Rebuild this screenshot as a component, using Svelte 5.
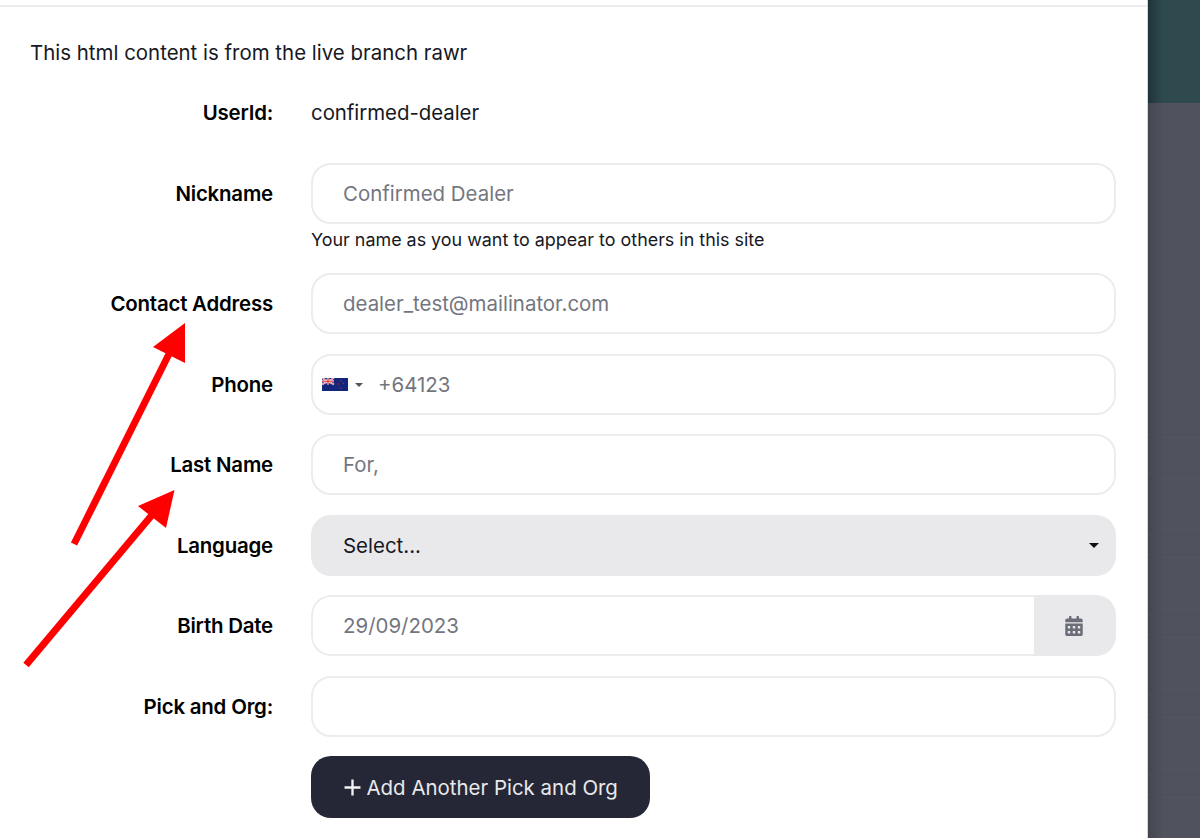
<script>
  let rows = [
    { label: 'Contact Address', value: 'dealer_test@mailinator.com' }
  ];
</script>

<div class="page">
  <div class="modal">
    <div class="modal-top"></div>
    <div class="modal-body">
      <p class="intro">This html content is from the live branch rawr</p>

      <div class="form">
        <div class="label userid">UserId:</div>
        <div class="static">confirmed-dealer</div>

        <label class="label" for="nick">Nickname</label>
        <div class="field">
          <input id="nick" readonly value="Confirmed Dealer" />
          <small>Your name as you want to appear to others in this site</small>
        </div>

        {#each rows as row}
          <label class="label" for="contact">{row.label}</label>
          <input id="contact" readonly value={row.value} />
        {/each}

        <label class="label" for="phone">Phone</label>
        <div class="phone">
          <svg class="flag" viewBox="0 0 26 13" width="26" height="13">
            <rect width="26" height="13" fill="#12277c" />
            <path d="M0 0 L12 6.5 M12 0 L0 6.5" stroke="#fff" stroke-width="1.6" />
            <path d="M0 0 L12 6.5 M12 0 L0 6.5" stroke="#d8202f" stroke-width="0.6" />
            <path d="M6 0 V6.5 M0 3.25 H12" stroke="#fff" stroke-width="2.2" />
            <path d="M6 0 V6.5 M0 3.25 H12" stroke="#d8202f" stroke-width="1.2" />
            <circle cx="19" cy="3" r="0.7" fill="#d8202f" />
            <circle cx="16.5" cy="6" r="0.7" fill="#d8202f" />
            <circle cx="21.5" cy="5.5" r="0.7" fill="#d8202f" />
            <circle cx="19" cy="10" r="0.7" fill="#d8202f" />
          </svg>
          <span class="caret small"></span>
          <input id="phone" readonly value="+64123" />
        </div>

        <label class="label" for="last">Last Name</label>
        <input id="last" readonly value="For," />

        <div class="label">Language</div>
        <div class="select">
          <span>Select...</span>
          <span class="caret"></span>
        </div>

        <label class="label" for="birth">Birth Date</label>
        <div class="date">
          <input id="birth" readonly value="29/09/2023" />
          <div class="addon">
            <svg viewBox="0 0 448 512" width="18" height="20" fill="#6b6e78">
              <path d="M0 464c0 26.5 21.5 48 48 48h352c26.5 0 48-21.5 48-48V192H0v272zm320-196c0-6.6 5.4-12 12-12h40c6.6 0 12 5.4 12 12v40c0 6.6-5.4 12-12 12h-40c-6.6 0-12-5.4-12-12v-40zm0 128c0-6.6 5.4-12 12-12h40c6.6 0 12 5.4 12 12v40c0 6.6-5.4 12-12 12h-40c-6.6 0-12-5.4-12-12v-40zM192 268c0-6.6 5.4-12 12-12h40c6.6 0 12 5.4 12 12v40c0 6.6-5.4 12-12 12h-40c-6.6 0-12-5.4-12-12v-40zm0 128c0-6.6 5.4-12 12-12h40c6.6 0 12 5.4 12 12v40c0 6.6-5.4 12-12 12h-40c-6.6 0-12-5.4-12-12v-40zM64 268c0-6.6 5.4-12 12-12h40c6.6 0 12 5.4 12 12v40c0 6.6-5.4 12-12 12H76c-6.6 0-12-5.4-12-12v-40zm0 128c0-6.6 5.4-12 12-12h40c6.6 0 12 5.4 12 12v40c0 6.6-5.4 12-12 12H76c-6.6 0-12-5.4-12-12v-40zM400 64h-48V16c0-8.8-7.2-16-16-16h-32c-8.8 0-16 7.2-16 16v48H160V16c0-8.8-7.2-16-16-16h-32c-8.8 0-16 7.2-16 16v48H48C21.5 64 0 85.5 0 112v48h448v-48c0-26.5-21.5-48-48-48z" />
            </svg>
          </div>
        </div>

        <label class="label" for="pick">Pick and Org:</label>
        <input id="pick" readonly value="" />

        <div></div>
        <button type="button">
          <svg viewBox="0 0 16 16" width="17" height="17"><path d="M8 0.5 V15.5 M0.5 8 H15.5" stroke="#f2f2f4" stroke-width="2.2" /></svg>
          Add Another Pick and Org
        </button>
      </div>
    </div>

    <!-- annotation arrows drawn over the screenshot -->
    <svg class="arrows" viewBox="0 0 1147 838" width="1147" height="838">
      <path d="M74 544 L170 352" stroke="#ff0000" stroke-width="7" />
      <path d="M185 323 L153 347 L185 363 Z" fill="#ff0000" />
      <path d="M26 665 L152 515" stroke="#ff0000" stroke-width="7" />
      <path d="M174.5 490 L138 506 L166 528 Z" fill="#ff0000" />
    </svg>
  </div>

  <div class="backdrop">
    <div class="backdrop-head"></div>
    <div class="backdrop-rest">
      {#each Array(5) as _}
        <div class="line"></div>
      {/each}
    </div>
  </div>
</div>

<style>
  :global(body) {
    margin: 0;
    overflow: hidden;
  }

  .page {
    display: flex;
    height: 838px;
    font-family: Inter, "Liberation Sans", sans-serif;
    font-size: 20.45px;
    color: #17181f;
  }

  .modal {
    position: relative;
    width: 1147px;
    background: #fff;
    border-right: 1px solid #d5d5d8;
    flex-shrink: 0;
  }

  .modal-top {
    height: 5px;
    border-bottom: 2px solid #ececee;
  }

  .modal-body {
    padding: 0 31px 0 30px;
  }

  .intro {
    margin: 0;
    padding-top: 34px;
    line-height: 24px;
  }

  .form {
    display: grid;
    grid-template-columns: 243px 805px;
    column-gap: 38px;
    row-gap: 19.5px;
    margin-top: 36px;
    align-items: start;
  }

  .label {
    text-align: right;
    font-weight: 600;
    color: #000;
    height: 61px;
    line-height: 61px;
    letter-spacing: -0.2px;
  }

  .label.userid,
  .static {
    height: 24px;
    line-height: 24px;
    margin-bottom: 18px;
  }

  .static {
    color: #17181f;
    font-weight: 400;
    letter-spacing: -0.05px;
  }

  input {
    box-sizing: border-box;
    width: 100%;
    height: 61px;
    border: 2px solid #ececee;
    border-radius: 20px;
    padding: 0 30px;
    font: inherit;
    color: #74767f;
    background: #fff;
    outline: none;
  }

  .field small {
    display: block;
    margin-top: 4px;
    margin-bottom: 2px;
    font-size: 17.9px;
    line-height: 24px;
    color: #17181f;
  }

  .phone {
    position: relative;
  }

  .phone input {
    padding-left: 65px;
  }

  .flag {
    position: absolute;
    left: 11px;
    top: 24px;
  }

  .caret {
    display: block;
    width: 0;
    height: 0;
    border-left: 5.5px solid transparent;
    border-right: 5.5px solid transparent;
    border-top: 5.5px solid #111;
  }

  .caret.small {
    position: absolute;
    left: 44px;
    top: 29px;
    border-left-width: 4px;
    border-right-width: 4px;
    border-top-width: 4px;
    border-top-color: #555;
  }

  .select {
    display: flex;
    align-items: center;
    justify-content: space-between;
    height: 61px;
    padding: 0 17px 0 32px;
    border-radius: 20px;
    background: #e9e9eb;
    color: #17181f;
  }

  .date {
    display: flex;
    height: 61px;
    border-radius: 20px;
    overflow: hidden;
  }

  .date input {
    flex: 1;
    border-right: 0;
    border-radius: 20px 0 0 20px;
  }

  .addon {
    display: flex;
    align-items: center;
    justify-content: center;
    box-sizing: border-box;
    width: 82px;
    padding-right: 2px;
    background: #e9e9eb;
  }

  button {
    display: inline-flex;
    align-items: center;
    gap: 6px;
    justify-self: start;
    height: 62px;
    padding: 0 32.5px;
    border: 0;
    border-radius: 20px;
    background: #252736;
    color: #e9e9eb;
    font: inherit;
  }

  .arrows {
    position: absolute;
    left: 0;
    top: 0;
    pointer-events: none;
  }

  .backdrop {
    flex: 1;
    display: flex;
    flex-direction: column;
    height: 838px;
  }

  .backdrop-head {
    flex-shrink: 0;
    height: 103px;
    background: linear-gradient(to right, #1f3438, #2f4a4f 30%);
  }

  .backdrop-rest {
    flex: 1;
    min-height: 0;
    overflow: hidden;
    display: flex;
    flex-direction: column;
    padding-top: 331px;
    background: linear-gradient(to right, #44464f, #50525e 30%);
  }

  .line {
    flex-shrink: 0;
    height: 19px;
    border-top: 1px solid #4c4e59;
    border-bottom: 1px solid #4c4e59;
    margin-bottom: 59px;
  }

  .line:first-child {
    height: 38px;
    margin-bottom: 60px;
  }
</style>
